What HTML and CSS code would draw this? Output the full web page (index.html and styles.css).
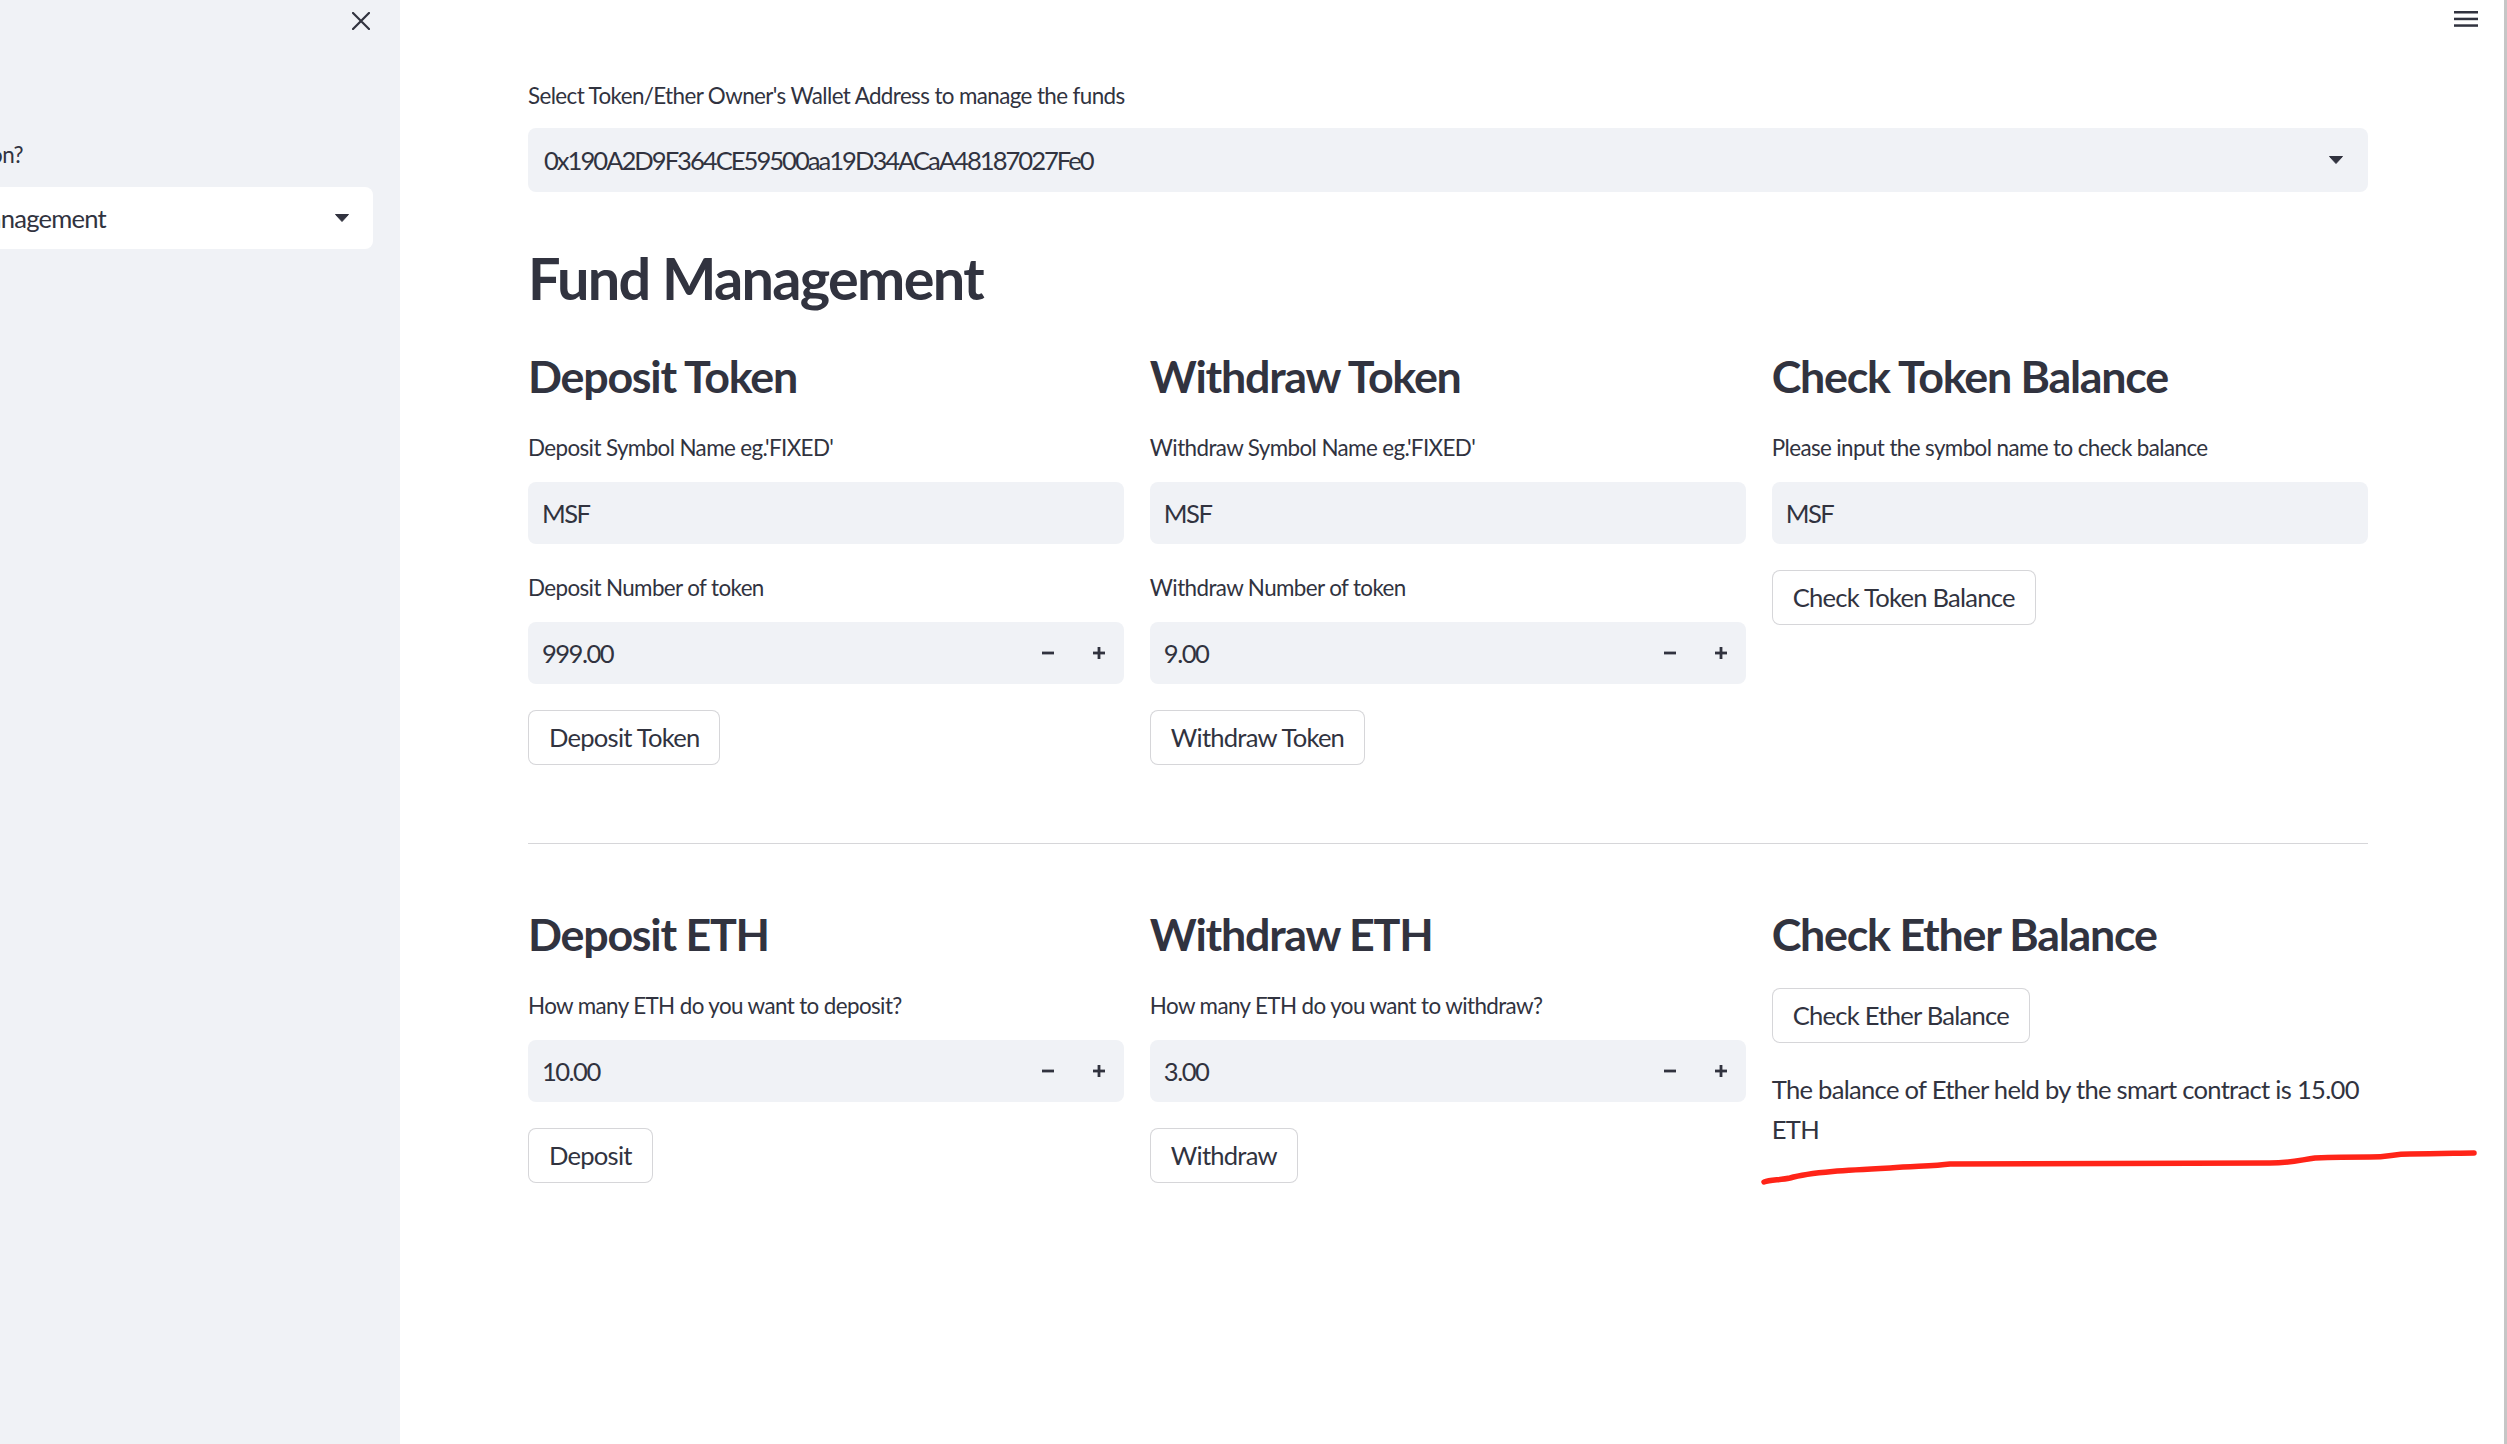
FILE: index.html
```html
<!DOCTYPE html>
<html lang="en">
<head>
<meta charset="utf-8">
<title>Fund Management</title>
<link rel="stylesheet" href="styles.css">
</head>
<body>
<div class="app">
  <aside class="sidebar">
    <div class="sb-top">
      <svg class="close-icon" width="18" height="18" viewBox="0 0 18 18"><path d="M1 1L17 17M17 1L1 17" stroke="#31333f" stroke-width="2.2" stroke-linecap="square" fill="none"/></svg>
    </div>
    <div class="sb-label"><span>Which Function?</span></div>
    <div class="sb-select">
      <div class="sb-value"><span>Fund Management</span></div>
      <svg class="caret" width="14" height="8" viewBox="0 0 14 8"><path d="M0.5 0.5H13.5L7 7.5Z" fill="#31333f" stroke="#31333f" stroke-width="1" stroke-linejoin="round"/></svg>
    </div>
  </aside>

  <main class="main">
    <div class="header">
      <svg class="menu-icon" width="24" height="16" viewBox="0 0 24 16"><rect x="0" y="0" width="24" height="2.5" fill="#31333f"/><rect x="0" y="6.7" width="24" height="2.5" fill="#31333f"/><rect x="0" y="13.3" width="24" height="2.5" fill="#31333f"/></svg>
    </div>
    <div class="content">
      <div class="field">
        <div class="label top-label">Select Token/Ether Owner's Wallet Address to manage the funds</div>
        <div class="select">
          <span class="value address">0x190A2D9F364CE59500aa19D34ACaA48187027Fe0</span>
          <svg class="caret" width="14" height="8" viewBox="0 0 14 8"><path d="M0.5 0.5H13.5L7 7.5Z" fill="#31333f" stroke="#31333f" stroke-width="1" stroke-linejoin="round"/></svg>
        </div>
      </div>

      <h2 class="title">Fund Management</h2>

      <div class="row">
        <div class="col">
          <h3 class="sub">Deposit Token</h3>
          <div class="field">
            <div class="label">Deposit Symbol Name eg.'FIXED'</div>
            <div class="input"><span class="value">MSF</span></div>
          </div>
          <div class="field">
            <div class="label">Deposit Number of token</div>
            <div class="input number">
              <span class="value">999.00</span>
              <div class="steps">
                <span class="step"><svg width="14" height="14" viewBox="0 0 14 14"><rect x="1" y="5.6" width="12" height="2.8" fill="#31333f"/></svg></span>
                <span class="step"><svg width="14" height="14" viewBox="0 0 14 14"><rect x="1" y="5.6" width="12" height="2.8" fill="#31333f"/><rect x="5.6" y="1" width="2.8" height="12" fill="#31333f"/></svg></span>
              </div>
            </div>
          </div>
          <div><button class="btn">Deposit Token</button></div>
        </div>

        <div class="col">
          <h3 class="sub">Withdraw Token</h3>
          <div class="field">
            <div class="label">Withdraw Symbol Name eg.'FIXED'</div>
            <div class="input"><span class="value">MSF</span></div>
          </div>
          <div class="field">
            <div class="label">Withdraw Number of token</div>
            <div class="input number">
              <span class="value">9.00</span>
              <div class="steps">
                <span class="step"><svg width="14" height="14" viewBox="0 0 14 14"><rect x="1" y="5.6" width="12" height="2.8" fill="#31333f"/></svg></span>
                <span class="step"><svg width="14" height="14" viewBox="0 0 14 14"><rect x="1" y="5.6" width="12" height="2.8" fill="#31333f"/><rect x="5.6" y="1" width="2.8" height="12" fill="#31333f"/></svg></span>
              </div>
            </div>
          </div>
          <div><button class="btn">Withdraw Token</button></div>
        </div>

        <div class="col">
          <h3 class="sub">Check Token Balance</h3>
          <div class="field">
            <div class="label">Please input the symbol name to check balance</div>
            <div class="input"><span class="value">MSF</span></div>
          </div>
          <div><button class="btn">Check Token Balance</button></div>
        </div>
      </div>

      <hr class="divider">

      <div class="row">
        <div class="col">
          <h3 class="sub">Deposit ETH</h3>
          <div class="field">
            <div class="label">How many ETH do you want to deposit?</div>
            <div class="input number">
              <span class="value">10.00</span>
              <div class="steps">
                <span class="step"><svg width="14" height="14" viewBox="0 0 14 14"><rect x="1" y="5.6" width="12" height="2.8" fill="#31333f"/></svg></span>
                <span class="step"><svg width="14" height="14" viewBox="0 0 14 14"><rect x="1" y="5.6" width="12" height="2.8" fill="#31333f"/><rect x="5.6" y="1" width="2.8" height="12" fill="#31333f"/></svg></span>
              </div>
            </div>
          </div>
          <div><button class="btn">Deposit</button></div>
        </div>

        <div class="col">
          <h3 class="sub">Withdraw ETH</h3>
          <div class="field">
            <div class="label">How many ETH do you want to withdraw?</div>
            <div class="input number">
              <span class="value">3.00</span>
              <div class="steps">
                <span class="step"><svg width="14" height="14" viewBox="0 0 14 14"><rect x="1" y="5.6" width="12" height="2.8" fill="#31333f"/></svg></span>
                <span class="step"><svg width="14" height="14" viewBox="0 0 14 14"><rect x="1" y="5.6" width="12" height="2.8" fill="#31333f"/><rect x="5.6" y="1" width="2.8" height="12" fill="#31333f"/></svg></span>
              </div>
            </div>
          </div>
          <div><button class="btn">Withdraw</button></div>
        </div>

        <div class="col">
          <h3 class="sub">Check Ether Balance</h3>
          <div><button class="btn">Check Ether Balance</button></div>
          <p class="balance">The balance of Ether held by the smart contract is 15.00<br>ETH</p>
        </div>
      </div>
    </div>
  </main>
  <div class="scrollbar"></div>

  <svg class="annotation" width="2507" height="1444" viewBox="0 0 2507 1444">
    <path d="M1764 1182 C1770 1180 1780 1180 1790 1178 C1810 1172 1850 1170 1890 1168 C1920 1166 1935 1166 1950 1164 C1990 1163 2100 1163 2270 1163 C2290 1163 2300 1160 2315 1158 C2340 1157 2360 1157 2370 1157 C2390 1157 2392 1154 2410 1154 C2440 1154 2460 1153 2474 1153" stroke="#ff2418" stroke-width="5.5" stroke-linecap="round" stroke-linejoin="round" fill="none"/>
  </svg>
</div>
</body>
</html>
```

FILE: styles.css
```css
* { box-sizing: border-box; }

html, body {
  margin: 0;
  padding: 0;
  background: #ffffff;
}

body {
  font-family: Lato, "Source Sans Pro", "Noto Sans", sans-serif;
  color: #31333f;
}

.app {
  display: flex;
  width: 2507px;
  height: 1444px;
  overflow: hidden;
  position: relative;
}

/* ---------- sidebar ---------- */
.sidebar {
  flex: none;
  width: 400px;
  height: 100%;
  background: #f0f2f6;
  overflow: hidden;
  display: flex;
  flex-direction: column;
}

.sb-top {
  height: 136px;
  display: flex;
  justify-content: flex-end;
  align-items: flex-start;
  padding: 12px 30px 0 0;
}

.sb-label {
  width: 23px;
  height: 36px;
  display: flex;
  justify-content: flex-end;
  align-items: center;
  white-space: nowrap;
  font-size: 22.4px;
  letter-spacing: -0.027em;
  margin-bottom: 15px;
}

.sb-select {
  width: 373px;
  height: 62px;
  background: #ffffff;
  border-radius: 0 8px 8px 0;
  display: flex;
  align-items: center;
  justify-content: space-between;
  padding-right: 24px;
}

.sb-value {
  width: 106px;
  display: flex;
  justify-content: flex-end;
  white-space: nowrap;
  font-size: 25.6px;
  letter-spacing: -0.03em;
}

/* ---------- main ---------- */
.main {
  flex: 1;
  min-width: 0;
  display: flex;
  flex-direction: column;
}

.header {
  height: 78px;
  display: flex;
  justify-content: flex-end;
  align-items: flex-start;
  padding: 11px 26px 0 0;
}

.menu-icon { display: block; }

.content {
  padding: 0 136px 0 128px;
  display: flex;
  flex-direction: column;
}

.field {
  display: flex;
  flex-direction: column;
}

.label {
  height: 36px;
  line-height: 36px;
  font-size: 22.4px;
  letter-spacing: -0.027em;
  margin-bottom: 16px;
  white-space: nowrap;
}

.label.top-label {
  margin-bottom: 14px;
}

.select {
  height: 64px;
  background: #f0f2f6;
  border-radius: 8px;
  display: flex;
  align-items: center;
  justify-content: space-between;
  padding: 0 25px 0 16px;
  font-size: 25.6px;
}

.value {
  letter-spacing: -0.06em;
}

.value.address {
  letter-spacing: -0.078em;
}

.caret { display: block; }

.title {
  margin: 50px 0 34px 0;
  font-size: 57.6px;
  line-height: 72px;
  height: 72px;
  font-weight: 700;
  letter-spacing: -0.029em;
}

.row {
  display: grid;
  grid-template-columns: repeat(3, 1fr);
  column-gap: 25.6px;
  align-items: start;
}

.col {
  display: flex;
  flex-direction: column;
  gap: 26px;
  min-width: 0;
}

.sub {
  margin: 0;
  height: 56px;
  font-size: 44.8px;
  line-height: 56px;
  font-weight: 700;
  letter-spacing: -0.028em;
  white-space: nowrap;
}

.input {
  height: 62px;
  background: #f0f2f6;
  border-radius: 8px;
  display: flex;
  align-items: center;
  justify-content: space-between;
  padding-left: 14px;
  font-size: 25.6px;
}

.steps {
  display: flex;
  height: 100%;
}

.step {
  width: 51px;
  height: 100%;
  display: flex;
  align-items: center;
  justify-content: center;
}

.step svg { display: block; }

.btn {
  height: 55px;
  padding: 0 20px;
  background: #ffffff;
  border: 1px solid rgba(49, 51, 63, 0.2);
  border-radius: 8px;
  font-family: inherit;
  font-size: 25.6px;
  letter-spacing: -0.03em;
  color: #31333f;
  line-height: 1;
}

.divider {
  margin: 78px 0 62px 0;
  border: none;
  height: 1px;
  background: rgba(49, 51, 63, 0.2);
}

.balance {
  margin: 0;
  font-size: 25.6px;
  line-height: 40px;
  letter-spacing: -0.028em;
  white-space: nowrap;
}

.scrollbar {
  flex: none;
  width: 3px;
  height: 100%;
  background: #c6c6c6;
}

.annotation {
  position: absolute;
  left: 0;
  top: 0;
  pointer-events: none;
}
```
